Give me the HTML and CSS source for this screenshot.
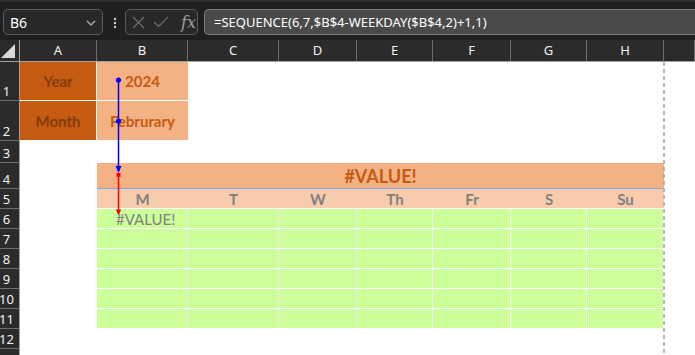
FILE: index.html
```html
<!DOCTYPE html>
<html lang="en">
<head>
    <meta charset="UTF-8">
    <title>Calendar - SEQUENCE</title>
    <link rel="stylesheet" href="styles.css">
</head>
<body>
    <div class="topbar">
        <div class="namebox">
            <span>B6</span>
            <svg class="chevron" width="10" height="6" viewBox="0 0 10 6"><path d="M1 1 L5 5 L9 1" fill="none" stroke="#bdbdbd" stroke-width="1.2"/></svg>
        </div>
        <svg class="more" width="4" height="12" viewBox="0 0 4 12"><circle cx="2" cy="2" r="1.2" fill="#cfcfcf"/><circle cx="2" cy="6" r="1.2" fill="#cfcfcf"/><circle cx="2" cy="10" r="1.2" fill="#cfcfcf"/></svg>
        <div class="fxbox">
            <svg width="13" height="13" viewBox="0 0 13 13"><path d="M1 1 L12 12 M12 1 L1 12" stroke="#6f6f6f" stroke-width="1.1"/></svg>
            <svg width="16" height="12" viewBox="0 0 16 12"><path d="M1 6 L5.5 10.5 L15 1" fill="none" stroke="#6f6f6f" stroke-width="1.1"/></svg>
            <span class="fx">fx</span>
        </div>
        <div class="formula">=SEQUENCE(6,7,$B$4-WEEKDAY($B$4,2)+1,1)</div>
    </div>

    <div class="sheet">
        <div class="row head">
            <div class="hdr corner"><svg width="14" height="14" viewBox="0 0 14 14"><polygon points="14,0 14,14 0,14" fill="#d9d9d9"/></svg></div>
            <div class="hdr">A</div><div class="hdr">B</div><div class="hdr">C</div><div class="hdr">D</div>
            <div class="hdr">E</div><div class="hdr">F</div><div class="hdr">G</div><div class="hdr">H</div><div class="hdr"></div>
        </div>
        <div class="row r1">
            <div class="rh">1</div><div class="c label">Year</div><div class="c value">2024</div>
        </div>
        <div class="row r2">
            <div class="rh">2</div><div class="c label">Month</div><div class="c value">Februrary</div>
        </div>
        <div class="row r3"><div class="rh">3</div></div>
        <div class="row r4">
            <div class="rh">4</div><div class="c"></div><div class="c title">#VALUE!</div>
        </div>
        <div class="row r5">
            <div class="rh">5</div><div class="c"></div>
            <div class="c day">M</div><div class="c day">T</div><div class="c day">W</div><div class="c day">Th</div>
            <div class="c day">Fr</div><div class="c day">S</div><div class="c day">Su</div>
        </div>
        <div class="row">
            <div class="rh">6</div><div class="c"></div>
            <div class="c g err">#VALUE!</div><div class="c g"></div><div class="c g"></div><div class="c g"></div>
            <div class="c g"></div><div class="c g"></div><div class="c g"></div>
        </div>
        <div class="row">
            <div class="rh">7</div><div class="c"></div>
            <div class="c g"></div><div class="c g"></div><div class="c g"></div><div class="c g"></div>
            <div class="c g"></div><div class="c g"></div><div class="c g"></div>
        </div>
        <div class="row">
            <div class="rh">8</div><div class="c"></div>
            <div class="c g"></div><div class="c g"></div><div class="c g"></div><div class="c g"></div>
            <div class="c g"></div><div class="c g"></div><div class="c g"></div>
        </div>
        <div class="row">
            <div class="rh">9</div><div class="c"></div>
            <div class="c g"></div><div class="c g"></div><div class="c g"></div><div class="c g"></div>
            <div class="c g"></div><div class="c g"></div><div class="c g"></div>
        </div>
        <div class="row">
            <div class="rh">10</div><div class="c"></div>
            <div class="c g"></div><div class="c g"></div><div class="c g"></div><div class="c g"></div>
            <div class="c g"></div><div class="c g"></div><div class="c g"></div>
        </div>
        <div class="row">
            <div class="rh">11</div><div class="c"></div>
            <div class="c g"></div><div class="c g"></div><div class="c g"></div><div class="c g"></div>
            <div class="c g"></div><div class="c g"></div><div class="c g"></div>
        </div>
        <div class="row"><div class="rh">12</div></div>
        <div class="row"><div class="rh"></div></div>
    </div>

    <!-- precedent trace arrows and page break, drawn over the grid -->
    <svg class="overlay" width="695" height="355" viewBox="0 0 695 355">
        <line x1="664" y1="62" x2="664" y2="355" stroke="#a3a3a3" stroke-width="1.5" stroke-dasharray="4 3"/>
        <line x1="118.5" y1="80" x2="118.5" y2="168" stroke="#0000ff" stroke-width="1.5"/>
        <polygon points="115.5,166 121.5,166 118.5,173" fill="#0000ff"/>
        <circle cx="118.5" cy="80" r="2.6" fill="#0000ff"/>
        <circle cx="118.5" cy="121" r="2.6" fill="#0000ff"/>
        <line x1="118.5" y1="175" x2="118.5" y2="211" stroke="#ff0000" stroke-width="1.5"/>
        <rect x="116.5" y="173" width="4" height="4" fill="#ff0000"/>
        <polygon points="115.8,209.5 121.2,209.5 118.5,215.5" fill="#ff0000"/>
    </svg>
</body>
</html>
```

FILE: styles.css
```css
body {
    margin: 0;
    width: 695px;
    height: 355px;
    overflow: hidden;
    background-color: #ffffff;
    font-family: "Lato", "Liberation Sans", sans-serif;
    position: relative;
}
.topbar {
    height: 40px;
    box-sizing: border-box;
    background-color: #1f1f1f;
    border-top: 2px solid #2e2e2e;
    padding-top: 7px;
    display: flex;
    align-items: flex-start;
}
.namebox {
    margin-left: 3px;
    width: 100px;
    height: 26px;
    box-sizing: border-box;
    border: 1px solid #5c5c5c;
    border-radius: 5px;
    background-color: #282828;
    display: flex;
    align-items: center;
    justify-content: space-between;
    padding: 0 6px 0 6px;
    color: #ffffff;
    font-family: "Noto Sans", sans-serif;
    font-size: 14px;
}
.chevron {
    margin-top: 2px;
}
.more {
    margin: 8px 8px 0 10px;
}
.fxbox {
    width: 73px;
    height: 26px;
    box-sizing: border-box;
    border: 1px solid #5c5c5c;
    border-radius: 5px;
    background-color: #282828;
    display: flex;
    align-items: center;
    padding-left: 6px;
    gap: 8px;
}
.fx {
    margin-left: 4px;
    font-family: "DejaVu Serif", serif;
    font-style: italic;
    font-size: 16px;
    color: #a0a0a0;
}
.formula {
    margin-left: 6px;
    flex: 1;
    height: 26px;
    box-sizing: border-box;
    border: 1px solid #7c7c7c;
    border-right: none;
    border-radius: 5px 0 0 5px;
    background-color: #4a4a4a;
    color: #ffffff;
    font-family: "Noto Sans", sans-serif;
    font-size: 13px;
    line-height: 24px;
    padding-left: 9px;
    white-space: nowrap;
}
.sheet {
    display: flex;
    flex-direction: column;
}
.row {
    display: grid;
    grid-template-columns: 20px 77px 91px 91px 78px 76px 78px 76px 77px 31px;
    height: 20px;
    flex-shrink: 0;
}
.row.head {
    height: 22px;
    background-color: #2b2b2b;
    border-bottom: 1px solid #a0a0a0;
    box-sizing: border-box;
}
.r1 { height: 39px; }
.r2 { height: 40px; }
.r3 { height: 22px; }
.r4 { height: 26px; }
.hdr {
    border-right: 1px solid #6e6e6e;
    color: #f2f2f2;
    font-family: "Noto Sans", sans-serif;
    font-size: 13px;
    text-align: center;
    line-height: 21px;
    box-sizing: border-box;
}
.hdr.corner {
    border-right-color: #a0a0a0;
    display: flex;
    align-items: flex-end;
    justify-content: flex-end;
    padding: 0 4px 3px 0;
}
.rh {
    background-color: #2b2b2b;
    border-right: 1px solid #a0a0a0;
    border-bottom: 1px solid #6e6e6e;
    box-sizing: border-box;
    color: #f2f2f2;
    font-family: "Noto Sans", sans-serif;
    font-size: 13px;
    display: flex;
    align-items: flex-end;
    justify-content: center;
    padding: 0 6px 1px 0;
    line-height: 16px;
}
.c {
    box-sizing: border-box;
    display: flex;
    align-items: center;
    justify-content: center;
    font-size: 15px;
}
.label {
    background-color: #c55a11;
    border-right: 1px solid #ffffff;
    border-bottom: 1px solid #ffffff;
    color: #843c0c;
    font-weight: bold;
}
.value {
    background-color: #f4b183;
    border-bottom: 1px solid #ffffff;
    color: #c55a11;
    font-weight: bold;
}
.title {
    grid-column: 3 / 10;
    background-color: #f4b183;
    border-bottom: 1px solid #8ea9db;
    color: #c55a11;
    font-weight: bold;
    font-size: 18px;
}
.day {
    background-color: #f8cbad;
    border-bottom: 1px solid #ffffff;
    color: #808080;
    font-weight: bold;
}
.g {
    background-color: #ccff99;
    border-right: 1px solid #ffffff;
    border-bottom: 1px solid #ffffff;
}
.err {
    justify-content: flex-start;
    padding-left: 19px;
    color: #808080;
}
.overlay {
    position: absolute;
    left: 0;
    top: 0;
    pointer-events: none;
}
```
